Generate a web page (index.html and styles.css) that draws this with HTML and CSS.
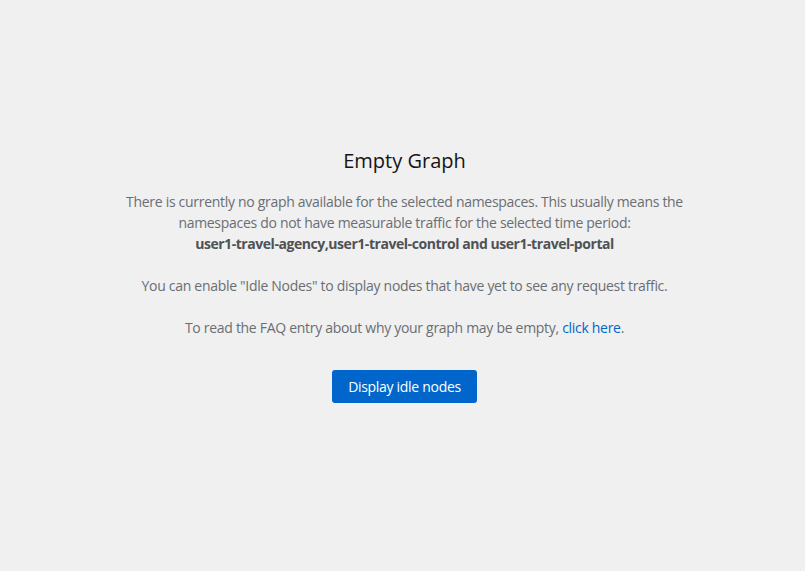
FILE: index.html
```html
<!DOCTYPE html>
<html lang="en">
<head>
<meta charset="utf-8">
<link rel="stylesheet" href="styles.css">
</head>
<body>
<main class="page">
  <section class="empty-state">
    <h1 class="title">Empty Graph</h1>
    <div class="body">
      There is currently no graph available for the selected namespaces. This usually means the namespaces do not have measurable traffic for the selected time period:
      <br>
      <b class="ns">user1-travel-agency,user1-travel-control and user1-travel-portal</b>
      <br><br>
      You can enable "Idle Nodes" to display nodes that have yet to see any request traffic.
      <br><br>
      To read the FAQ entry about why your graph may be empty, <a class="link" href="#">click here</a>.
    </div>
    <button class="btn" type="button">Display idle nodes</button>
  </section>
</main>
</body>
</html>
```
FILE: styles.css
```css
html, body {
  margin: 0;
  height: 100%;
  background: #f0f0f0;
}
body {
  font-family: "Open Sans", "Liberation Sans", sans-serif;
  color: #6a6e73;
}
.page {
  height: 100%;
  box-sizing: border-box;
  padding-bottom: 22px;
  padding-left: 4px;
  display: flex;
  justify-content: center;
  align-items: center;
}
.empty-state {
  display: flex;
  flex-direction: column;
  align-items: center;
  text-align: center;
}
.title {
  margin: 0;
  font-size: 20px;
  font-weight: 400;
  line-height: 30px;
  color: #151515;
}
.body {
  margin-top: 15px;
  width: 560px;
  font-size: 14px;
  line-height: 21px;
  letter-spacing: -0.3px;
}
.ns {
  font-weight: 700;
  color: #4f5255;
  letter-spacing: -0.45px;
}
.link {
  color: #0066cc;
  text-decoration: none;
}
.btn {
  margin-top: 32px;
  font-family: inherit;
  font-size: 14px;
  line-height: 21px;
  letter-spacing: -0.3px;
  padding: 6px 16px;
  border: 0;
  border-radius: 3px;
  background: #0066cc;
  color: #fff;
}
```
